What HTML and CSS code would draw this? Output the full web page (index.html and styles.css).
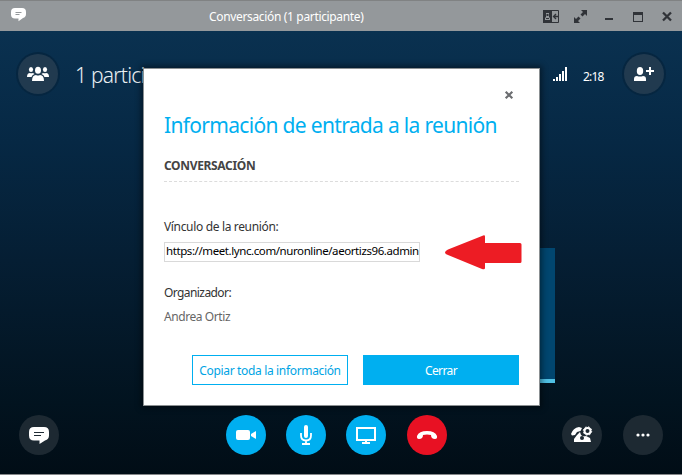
FILE: index.html
```html
<!DOCTYPE html>
<html lang="es">
<head>
<meta charset="utf-8">
<title>Conversación</title>
<link rel="stylesheet" href="styles.css">
</head>
<body>
<div class="window">
  <header class="titlebar">
    <svg class="app-icon" width="15" height="14" viewBox="0 0 15 14"><path d="M4 0h7q4 0 4 4v2q0 3-3 4L7.500 13.300V10.500H4Q0 10.500 0 6.500V4Q0 0 4 0z" fill="#fff"/><path d="M4.500 4.500h6M4.500 6.500h4" stroke="#94989b"/></svg>
    <span class="window-title">Conversación (1 participante)</span>
    <div class="window-controls">
      <svg width="16" height="13" viewBox="0 0 16 13"><path d="M.5.5h15v12H.5z" fill="none" stroke="#303338"/><path d="M0 0h9v13H0z" fill="#303338"/><path d="M2 10V8l1-1V3h3v4l1 1v2z" fill="#94989b"/><path d="M3.500 4h2v2h-2zM3 8h3v1H3z" fill="#303338"/><path d="M15 6.500h-4M13 4l-2.500 2.500L13 9" fill="none" stroke="#303338" stroke-width="1.300"/></svg>
      <svg width="13" height="13" viewBox="0 0 13 13"><path d="M7 0h6v6l-2-2-2.500 2.500-2-2L9 2zM0 7l2 2 2.500-2.500 2 2L4 11l2 2H0z" fill="#303338"/></svg>
      <svg width="8" height="13" viewBox="0 0 8 13"><path d="M0 8h8v2H0z" fill="#303338"/></svg>
      <svg width="10" height="13" viewBox="0 0 10 13"><path d="M0 2h10v10H0zM1 5v6h8V5z" fill="#303338" fill-rule="evenodd"/></svg>
      <svg width="10" height="13" viewBox="0 0 10 13"><path d="M1 2.500l8 8M9 2.500l-8 8" stroke="#303338" stroke-width="2.300"/></svg>
    </div>
  </header>
  <main class="call">
    <div class="call-header">
      <button class="round dim" aria-label="Participantes"><svg width="22" height="16" viewBox="0 0 22 16" fill="#fff"><ellipse cx="11" cy="4.200" rx="3" ry="3.500"/><path d="M5 15q0-6 4-6 2 1 4 0 4 0 4 6z"/><ellipse cx="4" cy="3.500" rx="2.100" ry="2.600"/><ellipse cx="18" cy="3.500" rx="2.100" ry="2.600"/><path d="M0 11q0-4 3-4 1 .5 3 0l1.500 1Q5 9 4.500 11zM22 11q0-4-3-4-1 .5-3 0l-1.500 1q2.500 1 3 3z"/></svg></button>
      <span class="participants">1 participante</span>
      <svg class="signal" width="14" height="14" viewBox="0 0 14 14" fill="#fff"><path d="M0 12h2v2H0zM3 10h2v4H3zM6 7h2v7H6zM9 4h2v10H9zM12 0h2v14h-2z"/></svg>
      <span class="timer">2:18</span>
      <button class="round dim" aria-label="Agregar"><svg width="22" height="16" viewBox="0 0 22 16" fill="#fff"><ellipse cx="7" cy="5" rx="3.200" ry="4"/><path d="M1 15v-2q0-3 3-3 3 1 6 0 3 0 3 3v2zM16 1h2v3h3v2h-3v3h-2V6h-3V4h3z"/></svg></button>
    </div>
    <div class="stage"><div class="tile"></div></div>
    <footer class="call-footer">
      <button class="round dim" aria-label="Mensajes"><svg width="20" height="18" viewBox="0 0 20 18"><path d="M5 1h10q5 0 5 5v3.500q0 4-4 5L10.500 18v-3.500H5q-5 0-5-5V6q0-5 5-5z" fill="#fff"/><path d="M5 6.500h10M5 9.500h7" stroke="#1f2b34"/></svg></button>
      <div class="media">
        <button class="round blue" aria-label="Cámara"><svg width="20" height="12" viewBox="0 0 20 12" fill="#fff"><rect y="1" width="14" height="10" rx="2"/><path d="M15 5l5-3v8l-5-3z"/></svg></button>
        <button class="round blue" aria-label="Micrófono"><svg width="14" height="20" viewBox="0 0 14 20"><rect x="5" width="4" height="13" rx="2" fill="#fff"/><path d="M2 8v2.500q0 5 5 5t5-5V8M7 15v4M3 19h8" fill="none" stroke="#fff" stroke-width="1.800"/></svg></button>
        <button class="round blue" aria-label="Pantalla"><svg width="20" height="18" viewBox="0 0 20 18"><path d="M1 2h18v12H1z" fill="none" stroke="#fff" stroke-width="2"/><path d="M9 14h2v2h3v2H6v-2h3z" fill="#fff"/></svg></button>
        <button class="round red" aria-label="Colgar"><svg width="20" height="10" viewBox="0 0 20 10"><path d="M0 6Q2 1 10 1t10 5q.5 3-2 3-4 0-4-4-4-1-8 0 0 4-4 4Q-.5 9 0 6z" fill="#fff"/></svg></button>
      </div>
      <button class="round dim" aria-label="Opciones de llamada"><svg width="22" height="18" viewBox="0 0 22 18"><path d="M0 8Q2 2 8 1l3 1-1.500 3L6 6 4 9 1 9.500zM3 16v-3l3-4 3-3 1 3q2 2 5 1l4 2 1 4z" fill="#fff"/><circle cx="11" cy="12" r="2" fill="#1d2932"/><circle cx="16.500" cy="5" r="3" fill="none" stroke="#fff" stroke-width="2"/><circle cx="16.500" cy="5" r="4.200" fill="none" stroke="#fff" stroke-dasharray="1.650"/></svg></button>
      <button class="round dim" aria-label="Más"><svg width="14" height="4" viewBox="0 0 14 4" fill="#fff"><circle cx="2" cy="2" r="1.600"/><circle cx="7" cy="2" r="1.600"/><circle cx="12" cy="2" r="1.600"/></svg></button>
    </footer>
  </main>
  <section class="dialog">
    <button class="close" aria-label="Cerrar"><svg width="8" height="8" viewBox="0 0 8 8"><path d="M.7.7l6.600 6.600M7.300.7L.7 7.300" stroke="#6b6d70" stroke-width="2.200"/></svg></button>
    <h1>Información de entrada a la reunión</h1>
    <h2><span>CONVERSACIÓN</span></h2>
    <div class="label link-label">Vínculo de la reunión:</div>
    <div class="link-row">
      <div class="link"><span>https://meet.lync.com/nuronline/aeortizs96.admin</span></div>
      <svg width="77" height="35" viewBox="0 0 77 35"><path d="M0 17.500Q0 16 3 14.500L37 1q3-1.500 3 .5V8h35q1.500 0 1.500 1.500v17q0 1.500-1.500 1.500H40v5q0 2-3 1L3 20Q0 19 0 17.500z" fill="#ed1c24"/></svg>
    </div>
    <div class="label org-label">Organizador:</div>
    <div class="organizer">Andrea Ortiz</div>
    <div class="actions">
      <button class="btn outline"><span>Copiar toda la información</span></button>
      <button class="btn solid"><span>Cerrar</span></button>
    </div>
  </section>
</div>
</body>
</html>
```
FILE: styles.css
```css
* { box-sizing: border-box; }
body { margin: 0; font-family: "Noto Sans", "Open Sans", sans-serif; font-size: 12px; letter-spacing: -0.34px; }
button { border: 0; padding: 0; font: inherit; letter-spacing: inherit; }
svg { display: block; flex: none; overflow: visible; }
.window { position: relative; width: 682px; height: 475px; display: flex; flex-direction: column; border-bottom: 1px solid #858789; overflow: hidden; }
.titlebar { height: 31px; flex: none; display: flex; align-items: center; background: #94989b; border-top: 1px solid #808283; padding: 0 10px 0 11px; color: #fff; }
.app-icon { margin-top: -2px; }
.window-title { margin-left: 183px; line-height: 18px; padding-top: 2px; white-space: nowrap; }
.window-controls { margin-left: auto; display: flex; align-items: center; }
.window-controls svg:nth-child(2) { margin-left: 15px; }
.window-controls svg:nth-child(3) { margin-left: 18px; }
.window-controls svg:nth-child(4) { margin-left: 20px; }
.window-controls svg:nth-child(5) { margin-left: 19px; }
.call { flex: 1; display: flex; flex-direction: column; background: linear-gradient(#0a3150, #062844 25%, #051e33 52%, #02131f 84%, #010d16); }
.call-header { display: flex; align-items: center; padding: 23px 18px 0; color: #fff; height: 63px; }
.round { width: 40px; height: 40px; border-radius: 50%; display: flex; align-items: center; justify-content: center; flex: none; }
.dim { background: #1d2932; }
.call-header .dim { background: #213a4f; box-shadow: 0 0 0 2px #062640; }
.blue { background: #00aff0; }
.red { background: #e81123; }
.participants { margin-left: 17px; padding-top: 1px; font-size: 21px; letter-spacing: -0.75px; white-space: nowrap; color: #e9eef2; font-weight: 300; }
.signal { margin-left: auto; }
.timer { margin-left: 16px; width: 21px; white-space: nowrap; margin-right: 20px; padding-top: 4px; letter-spacing: -0.8px; }
.stage { flex: 1; min-height: 0; display: flex; justify-content: flex-end; padding: 154px 127px 0 0; }
.tile { width: 400px; height: 135px; background: #01466f; border-bottom: 4px solid #50c0e4; }
.call-footer { height: 59px; flex: none; display: flex; padding: 0 19px; }
.media { display: flex; gap: 20px; margin-left: 167px; }
.media .red { margin-left: 1px; }
.media + .dim { margin-left: auto; margin-right: 21px; }
.dialog { position: absolute; left: 143px; top: 68px; width: 397px; height: 338px; background: #fff; border: 1px solid #8b9092; box-shadow: 0 0 6px 2px rgba(0,0,0,.45); padding: 22px 20px 20px; color: #333; display: flex; flex-direction: column; }
.close { background: none; width: 8px; height: 8px; align-self: flex-end; margin-right: 6px; flex: none; }
h1 { margin: 11px 0 0; font-size: 21px; line-height: 30px; letter-spacing: -0.68px; font-weight: 400; color: #00aff0; white-space: nowrap; }
h2 { margin: 17px 0 0; font-size: 12px; line-height: 18px; padding-bottom: 6px; height: 25px; color: #444; border-bottom: 1px dashed #dcdcdc; }
.label { line-height: 18px; height: 18px; white-space: nowrap; }
.link-label { margin-top: 36px; }
.link-row { display: flex; align-items: center; height: 36px; gap: 25px; margin-top: -2px; }
.link { flex: none; width: 256px; height: 20px; border: 1px solid #d9d9d9; padding-left: 1px; font-size: 11.5px; letter-spacing: -0.41px; line-height: 16px; color: #000; overflow: hidden; white-space: nowrap; }
.org-label { margin-top: 14px; letter-spacing: -0.58px; }
.organizer { margin-top: 6px; line-height: 18px; color: #666; letter-spacing: -0.42px; }
.actions { margin-top: auto; display: flex; justify-content: flex-end; gap: 15px; }
.btn { width: 156px; height: 30px; white-space: nowrap; background: #fff; color: #00a4e4; }
.outline { border: 1px solid #00aff0; }
.solid { background: #00aff0; color: #fff; letter-spacing: -0.6px; }
```
